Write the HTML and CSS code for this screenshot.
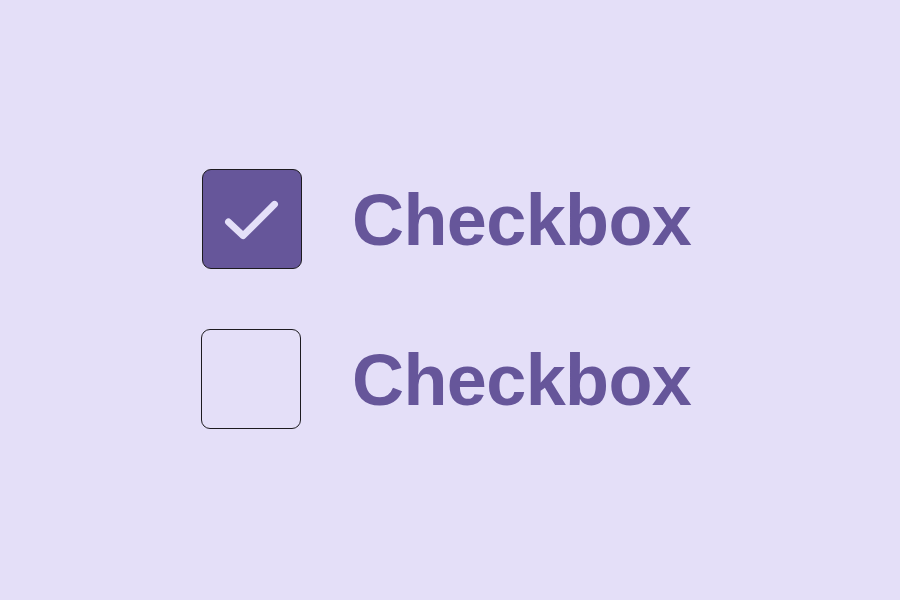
FILE: index.html
```html
<!DOCTYPE html>
<html>
<head>
<meta charset="utf-8">
<link rel="stylesheet" href="styles.css">
</head>
<body>
<div class="list">
  <label class="row">
    <span class="box checked">
      <svg viewBox="0 0 100 100" width="98" height="98"><path d="M26 53 L41 67 L73 35" fill="none" stroke="#e4dff8" stroke-width="7" stroke-linecap="round" stroke-linejoin="round"/></svg>
    </span>
    <span class="text">Checkbox</span>
  </label>
  <label class="row second">
    <span class="box"></span>
    <span class="text">Checkbox</span>
  </label>
</div>
</body>
</html>
```
FILE: styles.css
```css
html, body { margin: 0; padding: 0; }
body {
  width: 900px;
  height: 600px;
  background: #e4dff8;
  font-family: "Liberation Sans", Arial, sans-serif;
}
.list {
  display: flex;
  flex-direction: column;
  gap: 60px;
  padding: 169px 0 0 202px;
}
.row {
  display: flex;
  align-items: center;
  gap: 50px;
  height: 100px;
}
.row.second { margin-left: -1px; }
.row.second .text { margin-left: 1px; }
.box {
  width: 98px;
  height: 98px;
  border: 1px solid #1d1b20;
  border-radius: 9px;
  display: block;
  flex: none;
}
.box svg { display: block; }
.box.checked { background: #66569a; }
.text {
  font-size: 72px;
  font-weight: 700;
  color: #66569a;
  line-height: 1;
  letter-spacing: -0.6px;
  padding-top: 2px;
}
```
